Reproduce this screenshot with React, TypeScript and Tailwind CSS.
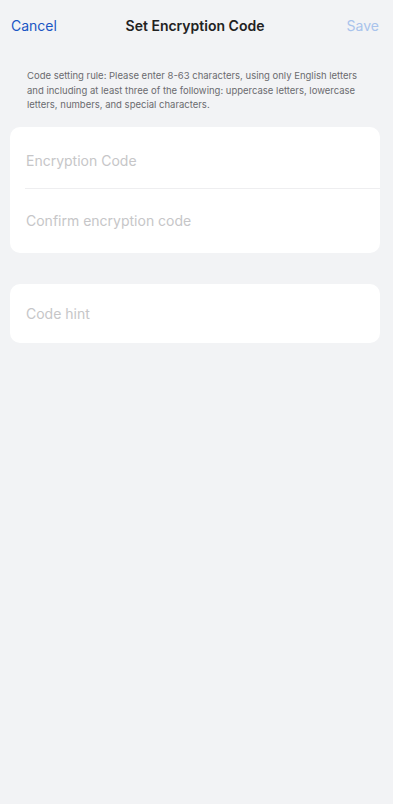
export default function App() {
  return (
    <div
      className="min-h-[804px] w-full bg-[#f2f3f5] text-[#1c1c1e]"
      style={{ fontFamily: "Inter, 'Noto Sans', sans-serif" }}
    >
      <header className="grid h-[50px] grid-cols-[1fr_auto_1fr] items-center pl-[11px] pr-[14px] pt-[1px]">
        <button className="justify-self-start text-[14px] text-[#1a56c4]">Cancel</button>
        <h1 className="text-[14px] font-semibold text-[#222]">Set Encryption Code</h1>
        <button className="justify-self-end text-[14px] text-[#a9c3ec]">Save</button>
      </header>

      <p className="px-[27px] pt-[19px] text-[9.5px] leading-[14.5px] text-[#6b6b6f]">
        Code setting rule: Please enter 8-63 characters, using only English letters and including
        at least three of the following: uppercase letters, lowercase letters, numbers, and special
        characters.
      </p>

      <div className="ml-[10px] mr-[13px] mt-[14px] rounded-[10px] bg-white">
        <div className="flex h-[61px] items-center pl-[16px] pt-[7px]">
          <input
            className="w-full bg-transparent text-[14px] outline-none placeholder:text-[#c6c6c8]"
            placeholder="Encryption Code"
          />
        </div>
        <div className="ml-[15px] h-px bg-[#eeeef0]" />
        <div className="flex h-[64px] items-center pl-[16px]">
          <input
            className="w-full bg-transparent text-[14px] outline-none placeholder:text-[#c6c6c8]"
            placeholder="Confirm encryption code"
          />
        </div>
      </div>

      <div className="ml-[10px] mr-[13px] mt-[31px] flex h-[59px] items-center rounded-[10px] bg-white pl-[16px] pt-[1px]">
        <input
          className="w-full bg-transparent text-[14px] outline-none placeholder:text-[#c6c6c8]"
          placeholder="Code hint"
        />
      </div>
    </div>
  );
}
